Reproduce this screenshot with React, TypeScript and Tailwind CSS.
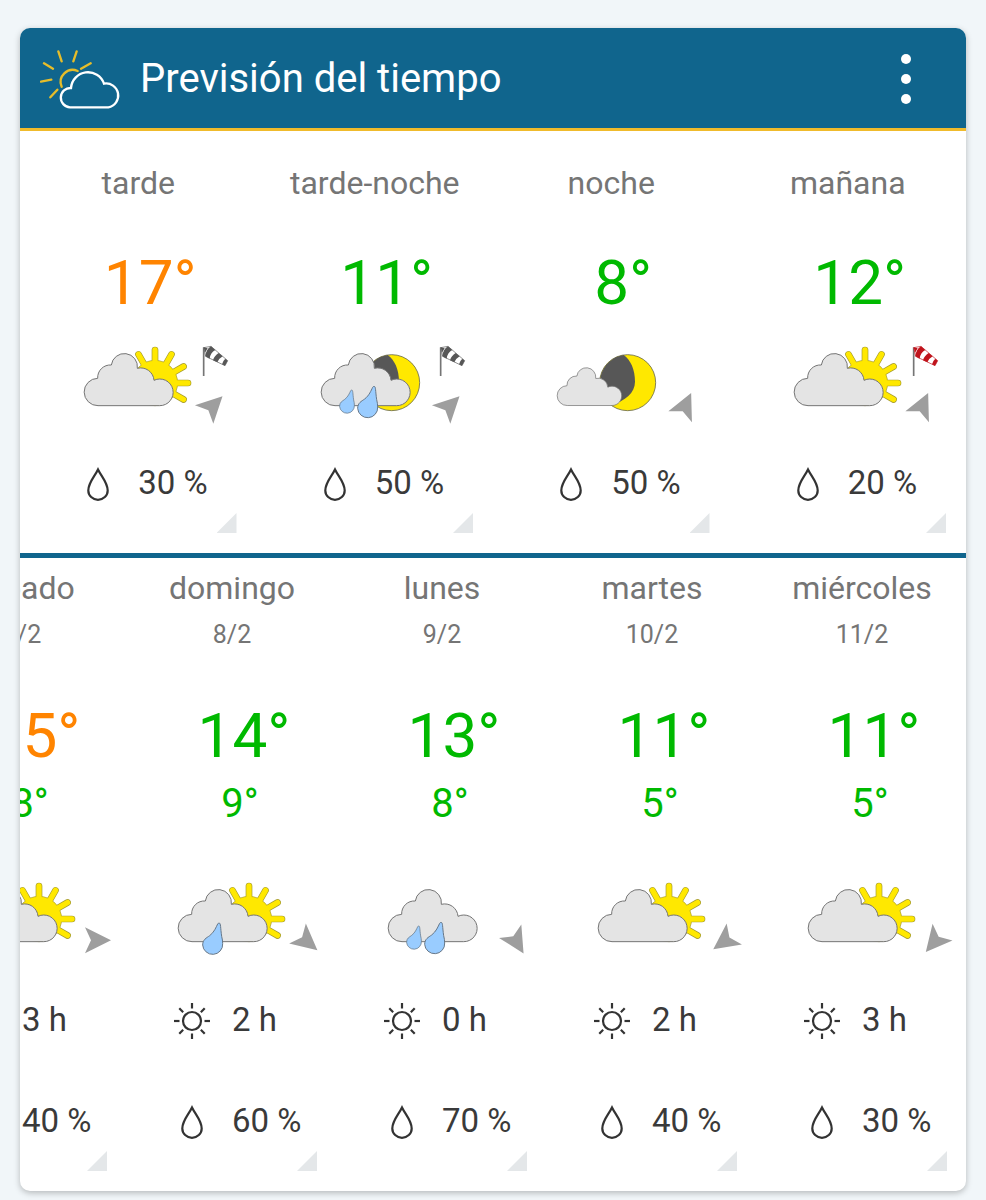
import React from 'react';

type Sky = 'sun' | 'sunRain' | 'moon' | 'moonRain' | 'rain';

interface Period {
  label: string;
  temp: number;
  tempColor: string;
  sky: Sky;
  wind: number;
  sock?: 'gray' | 'red';
  rain: number;
}

interface Day extends Period {
  date: string;
  min: number;
  sunHours: number;
}

const ORANGE = 'text-[#ff8400]';
const GREEN = 'text-[#00b900]';

const periods: Period[] = [
  { label: 'tarde', temp: 17, tempColor: ORANGE, sky: 'sun', wind: -45, sock: 'gray', rain: 30 },
  { label: 'tarde-noche', temp: 11, tempColor: GREEN, sky: 'moonRain', wind: -45, sock: 'gray', rain: 50 },
  { label: 'noche', temp: 8, tempColor: GREEN, sky: 'moon', wind: -65, rain: 50 },
  { label: 'mañana', temp: 12, tempColor: GREEN, sky: 'sun', wind: -65, sock: 'red', rain: 20 },
];

const days: Day[] = [
  { label: 'sábado', date: '7/2', temp: 15, min: 8, tempColor: ORANGE, sky: 'sun', wind: 0, sunHours: 3, rain: 40 },
  { label: 'domingo', date: '8/2', temp: 14, min: 9, tempColor: GREEN, sky: 'sunRain', wind: 40, sunHours: 2, rain: 60 },
  { label: 'lunes', date: '9/2', temp: 13, min: 8, tempColor: GREEN, sky: 'rain', wind: 59, sunHours: 0, rain: 70 },
  { label: 'martes', date: '10/2', temp: 11, min: 5, tempColor: GREEN, sky: 'sun', wind: 144, sunHours: 2, rain: 40 },
  { label: 'miércoles', date: '11/2', temp: 11, min: 5, tempColor: GREEN, sky: 'sun', wind: 130, sunHours: 3, rain: 30 },
];

const RAYS = [-120, -90, -60, -30, 0, 30];

function Sun() {
  const ray = (angle: number) => (
    <line key={angle} x1="50" y1="0" x2="99" y2="0" transform={`rotate(${angle})`} />
  );
  return (
    <g transform="translate(256 159)" strokeLinecap="round">
      <g stroke="#a39a30" strokeWidth="20">{RAYS.map(ray)}</g>
      <circle r="68" fill="#ffe800" stroke="#a39a30" strokeWidth="2" />
      <g stroke="#ffe800" strokeWidth="16">{RAYS.map(ray)}</g>
    </g>
  );
}

function Moon() {
  return (
    <g>
      <circle cx="255" cy="158" r="84" fill="#ffe800" stroke="#6b6b4a" strokeWidth="2.5" />
      <path d="M243 75 A84 84 0 0 0 205 225 C248 213 277 188 277 155 C277 118 264 90 243 75 Z" fill="#575757" />
    </g>
  );
}

function Cloud({ small }: { small?: boolean }) {
  return (
    <path
      d="M85 227 A41 41 0 0 1 84 145 A38 38 0 0 1 125 105 A39 39 0 0 1 203 115 A40 40 0 0 1 253 151 A40 40 0 1 1 270 227 Z"
      transform={small ? 'translate(12 62) scale(0.725)' : undefined}
      fill="#e4e4e4"
      stroke="#757575"
      strokeWidth="3"
    />
  );
}

function Raindrop({ x, y, scale = 1 }: { x: number; y: number; scale?: number }) {
  return (
    <path
      d="M0 0 C6 0 4 14 8 40 C10 48 11 54 11 62 A30 30 0 0 1 -49 66 C-49 50 -38 45 -28 38 C-14 27 -9 13 -4 3 Q-2 0 0 0 Z"
      transform={`translate(${x} ${y}) scale(${scale})`}
      fill="#99ccff"
      stroke="#667788"
      strokeWidth="3"
    />
  );
}

function Windsock({ color }: { color: 'gray' | 'red' }) {
  const fill = color === 'red' ? '#c0141c' : '#575757';
  return (
    <g transform="translate(0 2)">
      <path d="M402 50 V136" stroke="#757575" strokeWidth="5" />
      <path d="M402 51 L424 47 L474 90 L466 105 L408 77 Z" fill="#fff" stroke={fill} strokeWidth="2" />
      <path d="M402 50 L414 53 L406 66 Z" fill={fill} />
      <path d="M424 47 L437 58 Q422 66 420 84 L407 77 Q409 56 424 47 Z" fill={fill} />
      <path d="M447 67 L459 77 Q447 84 443 95 L430 89 Q434 75 447 67 Z" fill={fill} />
      <path d="M467 84 L474 90 L466 105 L457 101 Q459 91 467 84 Z" fill={fill} />
    </g>
  );
}

function SkyIcon({ sky, wind, windY, sock }: { sky: Sky; wind: number; windY: number; sock?: 'gray' | 'red' }) {
  return (
    <svg className="mx-auto block h-[100px] w-[210px]" viewBox="-110 0 630 300" aria-hidden="true">
      {(sky === 'sun' || sky === 'sunRain') && <Sun />}
      {(sky === 'moon' || sky === 'moonRain') && <Moon />}
      <Cloud small={sky === 'moon'} />
      {(sky === 'rain' || sky === 'moonRain') && (
        <>
          <Raindrop x={135} y={180} scale={0.74} />
          <Raindrop x={202} y={169} />
        </>
      )}
      {sky === 'sunRain' && <Raindrop x={166} y={171} />}
      {sock && <Windsock color={sock} />}
      <path
        d="M46 0 L-32 -39 L-14 0 L-32 39 Z"
        transform={`translate(426 ${windY}) rotate(${wind})`}
        fill="#9e9e9e"
      />
    </svg>
  );
}

function DropIcon() {
  return (
    <svg className="mr-5 h-10 w-10" viewBox="0 0 40 40" fill="none" stroke="#333" strokeWidth="2.2" aria-hidden="true">
      <path d="M20 6.5 C17 13 10.3 19.5 10.3 27.5 A9.7 9.3 0 0 0 29.7 27.5 C29.7 19.5 23 13 20 6.5 Z" />
    </svg>
  );
}

function SunHoursIcon() {
  return (
    <svg className="mr-5 h-10 w-10" viewBox="0 0 40 40" fill="none" stroke="#333" strokeWidth="2.2" aria-hidden="true">
      <circle cx="20" cy="21" r="9" />
      {[0, 45, 90, 135, 180, 225, 270, 315].map((a) => (
        <path key={a} d="M32.5 21 H38" transform={`rotate(${a} 20 21)`} />
      ))}
    </svg>
  );
}

function Reading({ icon, children }: { icon: React.ReactNode; children: React.ReactNode }) {
  return (
    <div className="grid h-10 grid-cols-2 text-[33px] leading-10 text-[#3a3a3a]">
      <div className="flex justify-end">{icon}</div>
      <div className="whitespace-nowrap">{children}</div>
    </div>
  );
}

function Corner() {
  return (
    <div className="mt-[10px] flex justify-end pr-5 pb-5">
      <div className="h-5 w-5 bg-[#e4e7e9] [clip-path:polygon(100%_0,100%_100%,0_100%)]" />
    </div>
  );
}

function Logo() {
  return (
    <svg className="h-[60px] w-[82px]" viewBox="90 84 246 180" fill="none" strokeLinecap="round" aria-hidden="true">
      <g stroke="#e6bd2a" strokeWidth="7">
        <path d="M155 197 A36 36 0 0 1 203 150" />
        <path d="M145 91 L155 121 M200 91 L190 121 M242 127 L213 143 M102 127 L129 143 M93 182 L124 176 M121 229 L142 206" />
      </g>
      <path
        d="M180 259 A29 29 0 0 1 183 201 A51 51 0 0 1 282 188 A36 36 0 1 1 295 259 Z"
        stroke="#fff"
        strokeWidth="7"
      />
    </svg>
  );
}

export default function App() {
  return (
    <div className="min-h-screen bg-[#f1f6f9] px-5 pt-7 pb-[9px] font-[Roboto,sans-serif]">
      <div className="overflow-hidden rounded-[10px] bg-white shadow-[0_2px_6px_rgba(0,0,0,0.25)]">
        <header className="flex h-[103px] items-center border-b-[3px] border-[#f0bb2c] bg-[#10658d] pt-0.5 pr-10 pl-5">
          <Logo />
          <h1 className="ml-[18px] flex-1 text-[40px] leading-[48px] text-white">Previsión del tiempo</h1>
          <button type="button" aria-label="Menú" className="flex h-16 w-10 flex-col items-center justify-center gap-[10px]">
            <span className="h-[10px] w-[10px] rounded-full bg-white" />
            <span className="h-[10px] w-[10px] rounded-full bg-white" />
            <span className="h-[10px] w-[10px] rounded-full bg-white" />
          </button>
        </header>

        <section className="grid grid-cols-4 border-b-[5px] border-[#10658d]">
          {periods.map((p) => (
            <div key={p.label} className="pt-8 text-center">
              <h2 className="text-[32px] leading-10 text-[#757575]">{p.label}</h2>
              <p className={`mt-12 pl-6 text-[62px] leading-[64px] ${p.tempColor}`}>{p.temp}°</p>
              <div className="mt-[15px] mb-[33px]">
                <SkyIcon sky={p.sky} wind={p.wind} windY={231} sock={p.sock} />
              </div>
              <div className="text-left">
                <Reading icon={<DropIcon />}>{p.rain} %</Reading>
              </div>
              <Corner />
            </div>
          ))}
        </section>

        {/* scrolled a little to the right, so the first day is cut off */}
        <section className="-ml-[103px] flex">
          {days.map((d) => (
            <div key={d.label} className="w-[210px] shrink-0 pt-[10px] text-center">
              <h2 className="text-[32px] leading-10 text-[#757575]">{d.label}</h2>
              <p className="mt-[11px] text-[25px] leading-8 text-[#757575]">{d.date}</p>
              <p className={`mt-[53px] pl-6 text-[62px] leading-[64px] ${d.tempColor}`}>{d.temp}°</p>
              <p className="mt-4 pl-4 text-[40px] leading-10 text-[#00b900]">{d.min}°</p>
              <div className="mt-[42px] mb-[34px]">
                <SkyIcon sky={d.sky} wind={d.wind} windY={223} />
              </div>
              <div className="flex flex-col gap-[61px] text-left">
                <Reading icon={<SunHoursIcon />}>{d.sunHours} h</Reading>
                <Reading icon={<DropIcon />}>{d.rain} %</Reading>
              </div>
              <Corner />
            </div>
          ))}
        </section>
      </div>
    </div>
  );
}
